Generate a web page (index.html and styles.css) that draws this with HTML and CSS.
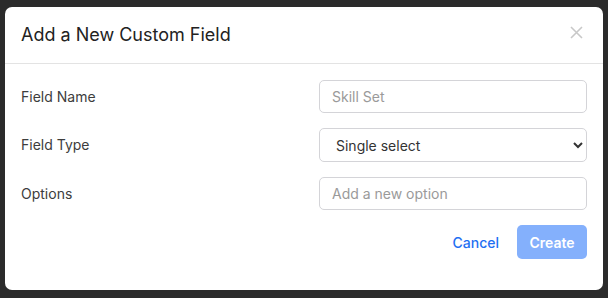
FILE: index.html
```html
<!DOCTYPE html>
<html lang="en">
<head>
<meta charset="utf-8">
<title>Add a New Custom Field</title>
<link rel="stylesheet" href="styles.css">
</head>
<body>
<div class="modal">
  <div class="modal-header">
    <h2 class="modal-title">Add a New Custom Field</h2>
    <button class="close" aria-label="Close">
      <svg width="13" height="13" viewBox="0 0 13 13"><path d="M1 1L12 12M12 1L1 12" stroke="#c8c8c8" stroke-width="1.6" fill="none"/></svg>
    </button>
  </div>
  <div class="modal-body">
    <div class="form-grid">
      <label class="label">Field Name</label>
      <input class="control" type="text" placeholder="Skill Set">
      <label class="label">Field Type</label>
      <select class="control select">
        <option>Single select</option>
      </select>
      <label class="label">Options</label>
      <input class="control" type="text" placeholder="Add a new option">
    </div>
    <div class="actions">
      <button class="btn-link">Cancel</button>
      <button class="btn-primary">Create</button>
    </div>
  </div>
</div>
</body>
</html>
```

FILE: styles.css
```css
html, body {
  margin: 0;
  padding: 0;
}
body {
  background: #2b2b2b;
  font-family: Inter, "Noto Sans", sans-serif;
  height: 298px;
  overflow: hidden;
}
.modal {
  margin: 7px 5px 0 5px;
  width: 598px;
  height: 283px;
  background: #fff;
  border-radius: 7px;
  box-sizing: border-box;
}
.modal-header {
  height: 57px;
  box-sizing: border-box;
  border-bottom: 1px solid #e3e3e3;
  display: flex;
  align-items: center;
  justify-content: space-between;
  padding: 0 20px 2px 16px;
}
.modal-title {
  margin: 0;
  font-size: 18px;
  font-weight: 400;
  color: #222;
}
.close {
  border: 0;
  background: none;
  padding: 0;
  width: 13px;
  height: 13px;
  display: flex;
  margin-top: -4px;
}
.modal-body {
  padding: 16px 16px 0 16px;
}
.form-grid {
  display: grid;
  grid-template-columns: 1fr 268px;
  row-gap: 15px;
  align-items: center;
}
.label {
  font-size: 14px;
  color: #3d3d3d;
  margin-top: -1px;
}
.control {
  height: 33px;
  box-sizing: border-box;
  border: 1px solid #d4d4d8;
  border-radius: 5px;
  padding: 0 12px;
  font-family: Inter, "Noto Sans", sans-serif;
  font-size: 14px;
  color: #333;
  background: #fff;
  width: 100%;
  outline: none;
}
.control::placeholder {
  color: #9a9a9a;
}
.select {
  padding: 0 8px 0 12px;
  height: 34px;
}
.actions {
  display: flex;
  justify-content: flex-end;
  align-items: center;
  gap: 18px;
  margin-top: 15px;
}
.btn-link {
  border: 0;
  background: none;
  font-family: Inter, "Noto Sans", sans-serif;
  font-size: 14px;
  font-weight: 500;
  color: #1f6ff2;
  padding: 0;
}
.btn-primary {
  border: 0;
  background: #84b0fc;
  color: #fff;
  font-family: Inter, "Noto Sans", sans-serif;
  font-size: 14px;
  font-weight: 600;
  width: 70px;
  height: 34px;
  border-radius: 5px;
  padding: 0;
}
```
